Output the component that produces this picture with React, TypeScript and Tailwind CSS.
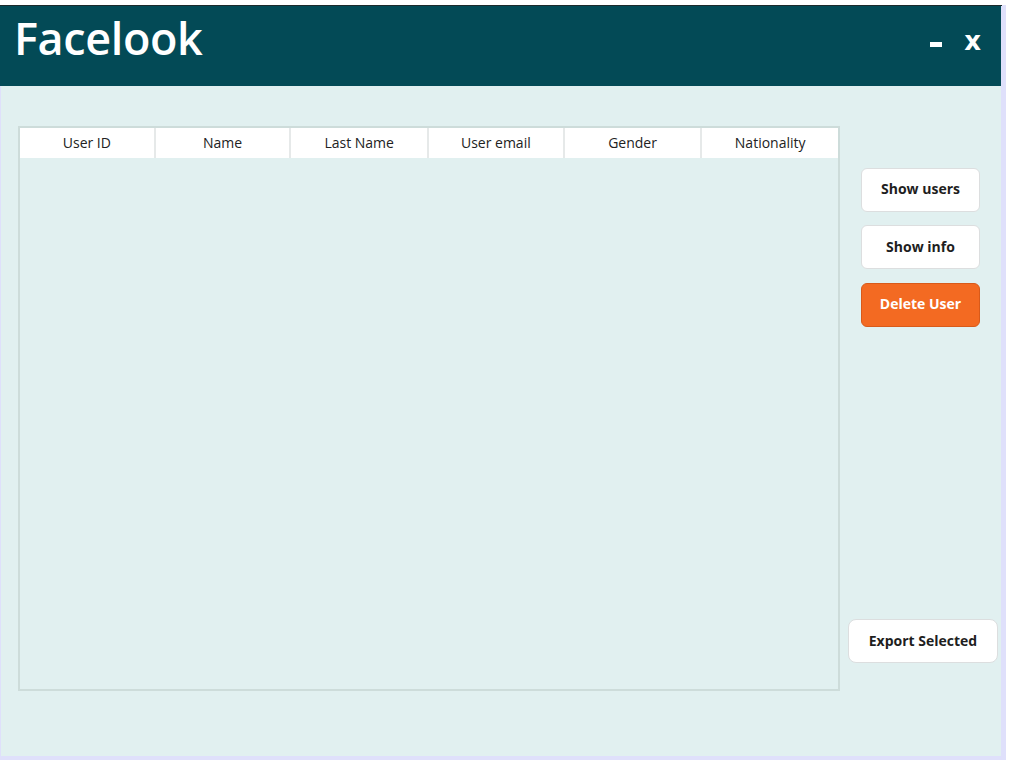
import React from "react";

const cols = ["User ID", "Name", "Last Name", "User email", "Gender", "Nationality"];
const widths = ["w-[136px]", "w-[136px]", "w-[138px]", "w-[136px]", "w-[138px]", "w-[136px]"];

export default function App() {
  return (
    <div className="w-[1013px] h-[767px] bg-white pt-[5px]" style={{ fontFamily: '"Open Sans", "Noto Sans", sans-serif' }}>
      <div className="w-[1006px] h-[755px] bg-[#dfe0fb] flex flex-col">
        <div className="w-[1002px] h-[1px] bg-[#1c2a2c]" />
        <div className="w-[1001px] h-[80px] bg-[#034a56] flex items-center justify-between pl-[14px] pr-[20px]">
          <div className="text-white text-[45px] font-semibold leading-none pb-[17px] tracking-[-0.4px]" style={{ fontFamily: '"Open Sans", sans-serif' }}>Facelook</div>
          <div className="flex items-center gap-[22px] pb-[11px]">
            <div className="w-[12px] h-[5px] bg-white mt-[8px]" />
            <div className="text-white text-[26px] font-bold leading-none" style={{ fontFamily: '"DejaVu Sans", sans-serif' }}>x</div>
          </div>
        </div>
        <div className="ml-[1px] w-[1000px] h-[670px] bg-[#e1f0f0] flex pt-[40px] pl-[17px]">
          <div className="w-[822px] h-[565px] border-2 border-[#cddcda] flex flex-col">
            <div className="flex h-[30px] bg-white">
              {cols.map((c, i) => (
                <div
                  key={c}
                  className={`${widths[i]} h-full flex items-center justify-center text-[14px] text-[#222] pb-[2px] ${i < cols.length - 1 ? "border-r-2 border-[#e6e9e9]" : ""}`}
                  style={{ fontFamily: '"Open Sans", sans-serif' }}
                >
                  {c}
                </div>
              ))}
            </div>
          </div>
          <div className="w-[161px] h-[565px] flex flex-col pb-[28px]">
            <button className="mt-[42px] ml-[21px] w-[119px] h-[44px] pb-[3px] bg-white border border-[#dcdedf] rounded-[6px] text-[14px] font-bold text-[#1e1e1e]">Show users</button>
            <button className="mt-[13px] ml-[21px] w-[119px] h-[44px] pb-[2px] bg-white border border-[#dcdedf] rounded-[6px] text-[14px] font-bold text-[#1e1e1e]">Show info</button>
            <button className="mt-[14px] ml-[21px] w-[119px] h-[44px] pb-[3px] bg-[#f36a22] border border-[#d85a1a] rounded-[6px] text-[14px] font-bold text-white">Delete User</button>
            <button className="mt-auto ml-[8px] w-[150px] h-[44px] pb-[1px] bg-white border border-[#dcdedf] rounded-[8px] text-[14px] font-bold text-[#1e1e1e]">Export Selected</button>
          </div>
        </div>
      </div>
    </div>
  );
}
